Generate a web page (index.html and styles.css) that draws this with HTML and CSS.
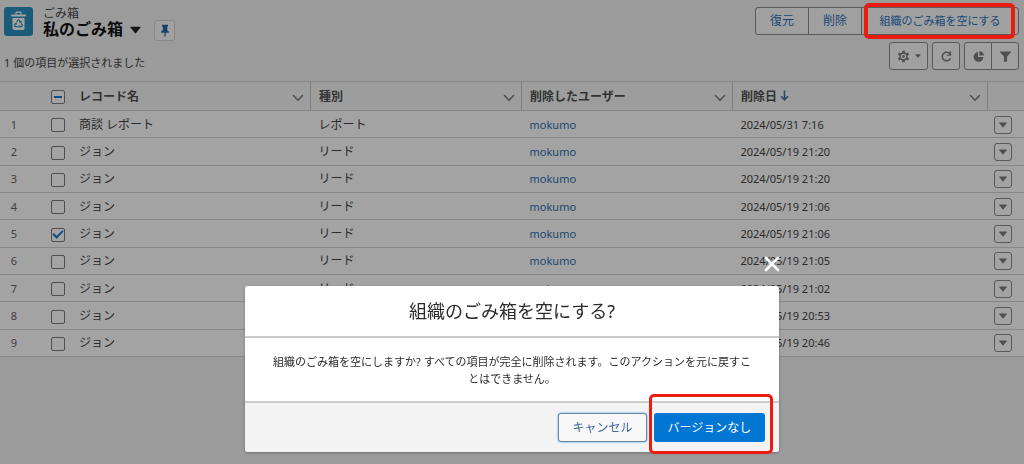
FILE: index.html
```html
<!DOCTYPE html>
<html lang="ja">
<head>
<meta charset="utf-8">
<meta name="viewport" content="width=device-width, initial-scale=1">
<title>私のごみ箱</title>
<link rel="stylesheet" href="styles.css">
</head>
<body>
<svg class="sprite" aria-hidden="true">
  <symbol id="chevron" viewBox="0 0 12 8"><path d="M1.5 1.5 6 6.2l4.500-4.700" fill="none" stroke="currentColor" stroke-width="1.600" stroke-linecap="round" stroke-linejoin="round"/></symbol>
  <symbol id="down" viewBox="0 0 10 7"><path d="M.8.5h8.400q.8 0 .3.7L5.600 6.200q-.6.700-1.200 0L.5 1.200Q0 .5.800.5Z" fill="currentColor"/></symbol>
</svg>
<header class="page-header">
  <div class="heading">
    <div class="identity">
      <span class="tile">
        <svg viewBox="0 0 29 29" width="29" height="29" aria-hidden="true">
          <path d="M12 7.500V6q0-.8.8-.8h3.400q.8 0 .8.800v1.500" fill="none" stroke="#fff" stroke-width="1.300"/>
          <rect x="7" y="7.500" width="15" height="2" rx=".8" fill="#fff"/>
          <path d="M8.500 11h12v10.300q0 1.700-1.700 1.700h-8.600q-1.700 0-1.700-1.700Z" fill="#fff"/>
          <path d="m12.600 15.300 1.200-2q.7-.9 1.400 0l1.300 2.100M17.300 16.400l1 1.800q.3 1.200-.8 1.400h-2.200M13.500 19.600h-2q-1.300-.3-.8-1.400l1-1.700" fill="none" stroke="#2a8fbd" stroke-width="1.200"/>
          <path d="m17.800 13.600-.4 2.600-2.300-1Zm-2.300 4.200v3.600l-1.900-1.800Zm-5.100-1.300 2.300-.9.300 2.300Z" fill="#2a8fbd"/>
        </svg>
      </span>
      <div class="names">
        <p class="object">ごみ箱</p>
        <h1 class="view">私のごみ箱</h1>
      </div>
      <button class="view-menu" aria-label="リストビューを選択"><svg width="11" height="8"><use href="#down"/></svg></button>
      <button class="pin" aria-label="固定"><svg viewBox="0 0 10 14" width="10" height="14"><path d="M2 .8h6v1.500L7.200 3v3.200l1.700 1.300v1.300H5.600V12L5 13.300 4.400 12V8.800H1.100V7.500l1.700-1.300V3L2 2.300Z" fill="currentColor"/></svg></button>
    </div>
    <p class="status">1 個の項目が選択されました</p>
  </div>
  <div class="tools">
    <div class="group actions">
      <button>復元</button><button>削除</button><button class="wide">組織のごみ箱を空にする</button>
    </div>
    <div class="icon-row">
      <button class="icon-button gear" aria-label="リストビューコントロール">
        <svg viewBox="0 0 14 14" width="13" height="13"><g fill="none" stroke="currentColor"><circle cx="7" cy="7" r="3.700" stroke-width="1.500"/><circle cx="7" cy="7" r=".9" stroke-width="1.200"/><path d="M7 .8v2.400M7 10.800v2.400M1.600 3.900l2 1.200M10.400 8.900l2 1.200M1.600 10.100l2-1.200M10.400 5.100l2-1.200" stroke-width="2.800"/></g></svg>
        <svg width="6" height="4"><use href="#down"/></svg>
      </button>
      <button class="icon-button" aria-label="更新"><svg viewBox="0 0 14 14" width="13" height="13"><path d="M10.700 4.200A4.600 4.600 0 1 0 11 9.500" fill="none" stroke="currentColor" stroke-width="1.700" stroke-linecap="round"/><path d="M12 1.300v5H7.200V5h3.200V1.300Z" fill="currentColor"/></svg></button>
      <div class="group">
        <button class="icon-button" aria-label="グラフ"><svg viewBox="0 0 14 14" width="13" height="13"><path d="M6.500 2.200v5.300h5.800A5.300 5.300 0 1 1 6.500 2.200Z" fill="currentColor"/><path d="M8 1.200V6h4.800Q12.300 2 8 1.200Z" fill="currentColor"/></svg></button>
        <button class="icon-button" aria-label="検索条件"><svg viewBox="0 0 14 14" width="13" height="13"><path d="M1.500 1.500h11q.8.200.3 1L8.600 7.200V12q0 .7-.6.700H6q-.6 0-.6-.7V7.200L1.200 2.500q-.5-.8.300-1Z" fill="currentColor"/></svg></button>
      </div>
    </div>
  </div>
</header>

<table class="records">
  <colgroup><col class="c-num"><col class="c-check"><col class="c-name"><col class="c-type"><col class="c-user"><col><col class="c-menu"></colgroup>
  <thead>
    <tr>
      <th></th>
      <th class="check"><input type="checkbox" class="partial" aria-label="すべて選択"></th>
      <th class="named"><div class="head"><span>レコード名</span><svg width="12" height="8"><use href="#chevron"/></svg></div></th>
      <th class="named"><div class="head"><span>種別</span><svg width="12" height="8"><use href="#chevron"/></svg></div></th>
      <th class="named"><div class="head"><span>削除したユーザー</span><svg width="12" height="8"><use href="#chevron"/></svg></div></th>
      <th class="named"><div class="head"><span>削除日 <svg class="sort" viewBox="0 0 9 11" width="9" height="11"><path d="M4.500.5v9M1 6.300l3.500 3.500L8 6.300" fill="none" stroke="currentColor" stroke-width="1.600"/></svg></span><svg width="12" height="8"><use href="#chevron"/></svg></div></th>
      <th></th>
    </tr>
  </thead>
  <tbody>
    <tr><td class="num">1</td><td class="check"><input type="checkbox" aria-label="1 を選択"></td><td>商談 レポート</td><td>レポート</td><td class="latin"><a href="#">mokumo</a></td><td class="latin">2024/05/31 7:16</td><td class="menu"><button aria-label="アクション"><svg width="8" height="6"><use href="#down"/></svg></button></td></tr>
    <tr><td class="num">2</td><td class="check"><input type="checkbox" aria-label="2 を選択"></td><td>ジョン</td><td>リード</td><td class="latin"><a href="#">mokumo</a></td><td class="latin">2024/05/19 21:20</td><td class="menu"><button aria-label="アクション"><svg width="8" height="6"><use href="#down"/></svg></button></td></tr>
    <tr><td class="num">3</td><td class="check"><input type="checkbox" aria-label="3 を選択"></td><td>ジョン</td><td>リード</td><td class="latin"><a href="#">mokumo</a></td><td class="latin">2024/05/19 21:20</td><td class="menu"><button aria-label="アクション"><svg width="8" height="6"><use href="#down"/></svg></button></td></tr>
    <tr><td class="num">4</td><td class="check"><input type="checkbox" aria-label="4 を選択"></td><td>ジョン</td><td>リード</td><td class="latin"><a href="#">mokumo</a></td><td class="latin">2024/05/19 21:06</td><td class="menu"><button aria-label="アクション"><svg width="8" height="6"><use href="#down"/></svg></button></td></tr>
    <tr><td class="num">5</td><td class="check"><input type="checkbox" checked aria-label="5 を選択"></td><td>ジョン</td><td>リード</td><td class="latin"><a href="#">mokumo</a></td><td class="latin">2024/05/19 21:06</td><td class="menu"><button aria-label="アクション"><svg width="8" height="6"><use href="#down"/></svg></button></td></tr>
    <tr><td class="num">6</td><td class="check"><input type="checkbox" aria-label="6 を選択"></td><td>ジョン</td><td>リード</td><td class="latin"><a href="#">mokumo</a></td><td class="latin">2024/05/19 21:05</td><td class="menu"><button aria-label="アクション"><svg width="8" height="6"><use href="#down"/></svg></button></td></tr>
    <tr><td class="num">7</td><td class="check"><input type="checkbox" aria-label="7 を選択"></td><td>ジョン</td><td>リード</td><td class="latin"><a href="#">mokumo</a></td><td class="latin">2024/05/19 21:02</td><td class="menu"><button aria-label="アクション"><svg width="8" height="6"><use href="#down"/></svg></button></td></tr>
    <tr><td class="num">8</td><td class="check"><input type="checkbox" aria-label="8 を選択"></td><td>ジョン</td><td>リード</td><td class="latin"><a href="#">mokumo</a></td><td class="latin">2024/05/19 20:53</td><td class="menu"><button aria-label="アクション"><svg width="8" height="6"><use href="#down"/></svg></button></td></tr>
    <tr><td class="num">9</td><td class="check"><input type="checkbox" aria-label="9 を選択"></td><td>ジョン</td><td>リード</td><td class="latin"><a href="#">mokumo</a></td><td class="latin">2024/05/19 20:46</td><td class="menu"><button aria-label="アクション"><svg width="8" height="6"><use href="#down"/></svg></button></td></tr>
  </tbody>
</table>

<div class="backdrop">
  <div class="callout callout-top"></div>
  <section class="modal" role="dialog" aria-modal="true" aria-labelledby="modal-title">
    <button class="close" aria-label="閉じる"><svg viewBox="0 0 16 16" width="16" height="16"><path d="m2 2 12 12M14 2 2 14" stroke="#fff" stroke-width="2.600" stroke-linecap="round"/></svg></button>
    <h2 id="modal-title" class="modal-title">組織のごみ箱を空にする?</h2>
    <p class="modal-body">組織のごみ箱を空にしますか? すべての項目が完全に削除されます。このアクションを元に戻すことはできません。</p>
    <footer class="modal-footer">
      <button class="cancel">キャンセル</button>
      <div class="confirm-wrap"><button class="confirm">バージョンなし</button><div class="callout callout-confirm"></div></div>
    </footer>
  </section>
</div>
</body>
</html>
```
FILE: styles.css
```css
* { box-sizing: border-box; }
body {
  margin: 0;
  min-height: 100vh;
  background: #f3f3f3;
  color: #444;
  font: 12px/16px "Noto Sans", "Noto Sans CJK JP", sans-serif;
}
h1, h2, p { margin: 0; }
button { font: inherit; margin: 0; padding: 0; cursor: pointer; }
svg { display: block; }
a { color: #2f6fb2; text-decoration: none; }
.sprite { position: absolute; width: 0; height: 0; }

.page-header {
  display: flex;
  justify-content: space-between;
  padding: 7px 5px 10px 4px;
}
.heading { display: flex; flex-direction: column; gap: 17px; }
.identity { display: flex; height: 31px; }
.tile { width: 29px; height: 29px; border-radius: 3px; background: #2a8fbd; }
.names { margin-left: 10px; }
.object { line-height: 13px; }
.view { font-size: 16px; line-height: 18px; font-weight: 700; color: #111; }
.view-menu { align-self: flex-end; margin: 0 0 4px 7px; border: 0; background: none; color: #222; }
.pin {
  display: grid;
  place-items: center;
  flex: none;
  width: 21px;
  height: 21px;
  margin: 13px 0 0 13px;
  border: 1px solid #d4d4d4;
  border-radius: 3px;
  background: #fbfbfb;
  color: #2766a8;
}
.status { font-size: 11px; }

.tools { display: flex; flex-direction: column; align-items: flex-end; gap: 7px; }
.group { display: flex; }
.group button { border-radius: 0; }
.group button + button { margin-left: -1px; }
.group button:first-child { border-radius: 3px 0 0 3px; }
.group button:last-child { border-radius: 0 3px 3px 0; }
.actions button {
  width: 54px;
  height: 28px;
  border: 1px solid #8b8b8b;
  background: #fbfbfb;
  color: #2d72b8;
}
.actions .wide { width: 158px; font-size: 11px; }
.icon-row { display: flex; gap: 4px; }
.icon-button {
  display: flex;
  align-items: center;
  justify-content: center;
  gap: 5px;
  width: 28px;
  height: 28px;
  border: 1px solid #8b8b8b;
  border-radius: 3px;
  background: #fbfbfb;
  color: #7c7c7c;
}
.gear { width: 39px; }

.records {
  width: 100%;
  height: 276px;
  table-layout: fixed;
  border-collapse: collapse;
  background: #fff;
}
.c-num { width: 36px; }
.c-check { width: 35px; }
.c-name { width: 23.4%; }
.c-type, .c-user { width: 20.6%; }
.c-menu { width: 37px; }
.records th, .records td { padding: 1px 0 0 8px; border-bottom: 1px solid #d4d4d4; text-align: left; }
.records th { height: 29px; border-top: 1px solid #d4d4d4; background: #f6f6f6; color: #444; }
.records .named { border-right: 1px solid #c4c4c4; padding-right: 6px; }
.head { display: flex; align-items: center; justify-content: space-between; color: #505050; }
.head > svg { color: #7c7c7c; margin-top: 2px; }
.sort { display: inline-block; color: #4d6f9a; }
.records .num { padding: 1px 8px 0 0; text-align: center; font-size: 11px; color: #666; }
.records .check { padding: 1px 6px 0 0; text-align: right; }
.records .latin { font-size: 11px; }
.records .menu { padding: 1px 0 0; }
.menu button {
  display: grid;
  place-items: center;
  width: 18px;
  height: 18px;
  margin-left: 7px;
  border: 1px solid #8b8b8b;
  border-radius: 3px;
  background: #fff;
  color: #7c7c7c;
}
input[type="checkbox"] {
  appearance: none;
  display: inline-grid;
  place-items: center;
  width: 14px;
  height: 14px;
  margin: 0;
  border: 1px solid #7c7c7c;
  border-radius: 2px;
  background: #fff;
  vertical-align: middle;
}
.partial::after { content: ""; width: 8px; height: 2px; background: #1b78ce; }
input:checked::after {
  content: "";
  width: 8px;
  height: 4px;
  margin-bottom: 3px;
  border: solid #1b78ce;
  border-width: 0 0 2px 2px;
  transform: rotate(-45deg);
}

.backdrop {
  position: fixed;
  inset: 0;
  display: flex;
  align-items: flex-end;
  justify-content: center;
  padding: 12px;
  background: rgba(0, 0, 0, .36);
}
.modal {
  position: relative;
  width: 534px;
  max-width: 100%;
  border-radius: 3px;
  background: #fff;
  color: #2b2b2b;
  box-shadow: 0 1px 3px rgba(0, 0, 0, .3);
}
.close { position: absolute; right: -1px; bottom: calc(100% + 14px); border: 0; background: none; }
.modal-title {
  padding: 13px 16px;
  border-bottom: 2px solid #cbcbcb;
  font-size: 18px;
  line-height: 24px;
  font-weight: 400;
  text-align: center;
}
.modal-body { padding: 15px 24px 14px; font-size: 11px; line-height: 17px; text-align: center; }
.modal-footer {
  display: flex;
  justify-content: flex-end;
  gap: 7px;
  padding: 10px 14px;
  border-top: 2px solid #cbcbcb;
  border-radius: 0 0 3px 3px;
  background: #f3f3f3;
}
.cancel, .confirm { height: 29px; border-radius: 3px; }
.cancel {
  width: 89px;
  border: 1px solid #70839c;
  background: #f8f8f8;
  color: #3f639b;
  box-shadow: 0 0 2px #1b96ff;
}
.confirm-wrap { position: relative; }
.confirm { width: 111px; border: 0; background: #0176d3; color: #fff; }
.callout { position: absolute; border: 3px solid #ea1c10; border-radius: 5px; pointer-events: none; }
.callout-top { top: 3px; right: 9px; width: 151px; height: 36px; border-width: 4px; }
.callout-confirm { inset: -19px -8px -12px -5px; }
```
